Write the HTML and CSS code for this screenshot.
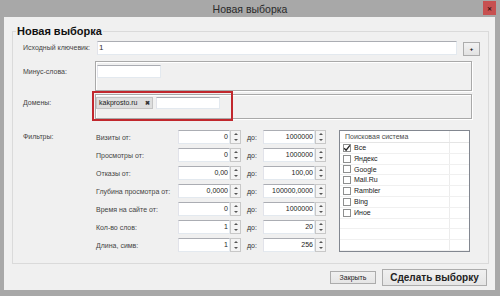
FILE: index.html
```html
<!DOCTYPE html>
<html lang="ru">
  <head>
    <meta charset="UTF-8" />
    <title>Новая выборка</title>
    <link rel="stylesheet" href="styles.css">
  </head>
  <body>
    <div class="window">
      <div class="titlebar">
        <span></span>
        <span class="title">Новая выборка</span>
        <span class="close">✕</span>
      </div>
      <div class="client">
        <fieldset class="panel">
          <legend>Новая выборка</legend>

          <div class="row row-key">
            <label class="lbl">Исходный ключевик:</label>
            <div class="input wide">1</div>
            <button class="plus">+</button>
          </div>

          <div class="row row-minus">
            <label class="lbl">Минус-слова:</label>
            <div class="box minus-box">
              <div class="input small"></div>
            </div>
          </div>

          <div class="row row-domains">
            <label class="lbl">Домены:</label>
            <div class="box domain-box">
              <span class="tag">kakprosto.ru <b>✖</b></span>
              <div class="input small"></div>
              <div class="highlight"></div>
            </div>
          </div>

          <div class="row row-filters">
            <label class="lbl">Фильтры:</label>
            <div class="filters" id="filters"></div>
            <div class="listbox">
              <div class="list-head"><span>Поисковая система</span></div>
              <div id="engines"></div>
            </div>
          </div>
        </fieldset>

        <div class="footer">
          <button class="btn btn-close">Закрыть</button>
          <button class="btn btn-main">Сделать выборку</button>
        </div>
      </div>
    </div>

    <script>
      const filters = [
        { label: "Визиты от:", from: "0", to: "1000000" },
        { label: "Просмотры от:", from: "0", to: "1000000" },
        { label: "Отказы от:", from: "0,00", to: "100,00" },
        { label: "Глубина просмотра от:", from: "0,0000", to: "100000,0000" },
        { label: "Время на сайте от:", from: "0", to: "1000000" },
        { label: "Кол-во слов:", from: "1", to: "20" },
        { label: "Длина, симв:", from: "1", to: "256" },
      ];

      const engines = [
        { name: "Все", checked: true },
        { name: "Яндекс" },
        { name: "Google" },
        { name: "Mail.Ru" },
        { name: "Rambler" },
        { name: "Bing" },
        { name: "Иное" },
      ];

      function spinner(value) {
        return `<div class="num"><span class="val">${value}</span><span class="spin"><i class="up"></i><i class="down"></i></span></div>`;
      }

      const filtersDiv = document.getElementById("filters");
      filters.forEach((f) => {
        filtersDiv.innerHTML += `<span class="flbl">${f.label}</span>${spinner(f.from)}<span class="to">до:</span>${spinner(f.to)}`;
      });

      const check =
        '<svg viewBox="0 0 8 8" width="8" height="8"><path d="M1.2 4.2 L3.1 6.2 L6.9 1.4" fill="none" stroke="#222" stroke-width="1.3"/></svg>';

      const enginesDiv = document.getElementById("engines");
      engines.forEach((e) => {
        enginesDiv.innerHTML += `<div class="item"><span class="cb">${e.checked ? check : ""}</span>${e.name}</div>`;
      });
      for (let i = 0; i < 3; i++) {
        enginesDiv.innerHTML += `<div class="item"></div>`;
      }
    </script>
  </body>
</html>
```

FILE: styles.css
```css
* {
  box-sizing: border-box;
}
body {
  margin: 0;
  font-family: "Liberation Sans", Arial, sans-serif;
  font-size: 7px;
  color: #333;
  background: #a8a8a8;
}
.window {
  width: 500px;
  height: 296px;
  background: #a8a8a8;
  display: flex;
  flex-direction: column;
}
.titlebar {
  height: 17px;
  display: grid;
  grid-template-columns: 1fr auto 1fr;
  align-items: center;
}
.title {
  font-size: 10.5px;
  color: #2a2a2a;
}
.close {
  justify-self: end;
  align-self: start;
  margin: 1px 4px 0 0;
  width: 13px;
  height: 14px;
  background: #c75050;
  color: #3a1010;
  font-size: 6px;
  font-weight: bold;
  display: flex;
  align-items: center;
  justify-content: center;
}
.client {
  flex: 1;
  margin: 0 5px 6px 4px;
  background: #f0f0f0;
  display: flex;
  flex-direction: column;
}
.panel {
  margin: 7px 6px 0 8px;
  padding: 3px 0 11px 10px;
  border: 1px solid #dadada;
  min-width: 0;
}
.panel legend {
  font-size: 11px;
  font-weight: bold;
  line-height: 14px;
  color: #111;
  padding: 0 1px;
  margin-left: -7px;
}
.row {
  display: flex;
  align-items: flex-start;
}
.lbl {
  width: 72px;
  flex: none;
  line-height: 14px;
  color: #444;
}
.input {
  background: #fff;
  border: 1px solid #abadb3;
  border-color: #abadb3 #e3e9ef #e3e9ef #e2e3ea;
}
.input.wide {
  width: 360px;
  height: 14px;
  margin-left: 2px;
  line-height: 12px;
  font-size: 8px;
  padding-left: 1px;
}
.plus {
  width: 17px;
  height: 14px;
  margin: 1px 0 0 6px;
  padding: 0;
  border: 1px solid #acacac;
  background: linear-gradient(#f2f2f2, #e2e2e2);
  font-size: 6px;
  font-weight: bold;
  line-height: 10px;
}
.box {
  width: 377px;
  border: 1px solid #a9a9a9;
  box-shadow: inset 1px 1px 0 #fff, 1px 1px 0 #fff;
  display: flex;
  align-items: flex-start;
}
.row-minus {
  margin-top: 5px;
}
.row-minus .lbl {
  padding-top: 4px;
}
.minus-box {
  height: 30px;
}
.minus-box .input {
  margin: 3px 0 0 1px;
}
.input.small {
  width: 64px;
  height: 13px;
}
.row-domains {
  margin-top: 3px;
}
.row-domains .lbl {
  padding-top: 2px;
}
.domain-box {
  height: 25px;
  position: relative;
}
.tag {
  margin: 2px 0 0 0;
  width: 57px;
  height: 12px;
  background: #dedede;
  border: 1px solid #c4c4c4;
  line-height: 10px;
  padding-left: 2px;
  color: #222;
  white-space: nowrap;
}
.tag b {
  font-size: 6px;
  margin-left: 6px;
  color: #333;
}
.domain-box .input {
  margin: 2px 0 0 3px;
  height: 12px;
}
.highlight {
  position: absolute;
  left: -4px;
  top: -4px;
  width: 141px;
  height: 30px;
  border: 2px solid #c1272d;
}
.row-filters {
  margin-top: 11px;
}
.filters {
  display: grid;
  grid-template-columns: 83px 63px 22px 63px;
  grid-auto-rows: 14px;
  row-gap: 4px;
  align-items: center;
}
.flbl {
  padding-left: 1px;
  color: #444;
}
.to {
  padding-left: 6px;
}
.num {
  display: flex;
  height: 14px;
}
.num .val {
  flex: 1;
  background: #fff;
  border: 1px solid #abadb3;
  border-color: #abadb3 #e3e9ef #e3e9ef #e2e3ea;
  text-align: right;
  line-height: 12px;
  padding-right: 1px;
  color: #222;
}
.num .spin {
  width: 11px;
  border: 1px solid #c8c8c8;
  background: #f4f4f4;
  display: flex;
  flex-direction: column;
  align-items: center;
  justify-content: space-around;
}
.spin i {
  width: 0;
  height: 0;
  border-left: 2.5px solid transparent;
  border-right: 2.5px solid transparent;
}
.spin .up {
  border-bottom: 2.5px solid #555;
}
.spin .down {
  border-top: 2.5px solid #555;
}
.listbox {
  margin-left: 13px;
  width: 131px;
  height: 122px;
  border: 1px solid #828790;
  background: linear-gradient(to right, transparent 109px, #ececec 109px, #ececec 110px, transparent 110px), #fff;
  overflow: hidden;
}
.list-head {
  height: 12px;
  line-height: 11px;
  padding-left: 5px;
  border-bottom: 1px solid #e5e5e5;
  color: #4a4a4a;
}
.item {
  height: 10.8px;
  line-height: 10px;
  border-bottom: 1px solid #f0f0f0;
  display: flex;
  align-items: center;
  padding-left: 3px;
  color: #222;
}
.cb {
  width: 8px;
  height: 8px;
  border: 1px solid #8e8f8f;
  background: #fff;
  margin-right: 3px;
  display: flex;
  align-items: center;
  justify-content: center;
}
.cb svg {
  flex: none;
}
.footer {
  flex: 1;
  display: flex;
  justify-content: flex-end;
  align-items: center;
  gap: 6px;
  padding-right: 8px;
}
.btn {
  border: 1px solid #acacac;
  background: linear-gradient(#f0f0f0, #e5e5e5);
  font-family: "Liberation Sans", Arial, sans-serif;
  color: #222;
  padding: 0;
}
.btn-close {
  width: 46px;
  height: 13px;
  font-size: 7px;
}
.btn-main {
  width: 105px;
  height: 17px;
  font-size: 10px;
  font-weight: bold;
}
```
